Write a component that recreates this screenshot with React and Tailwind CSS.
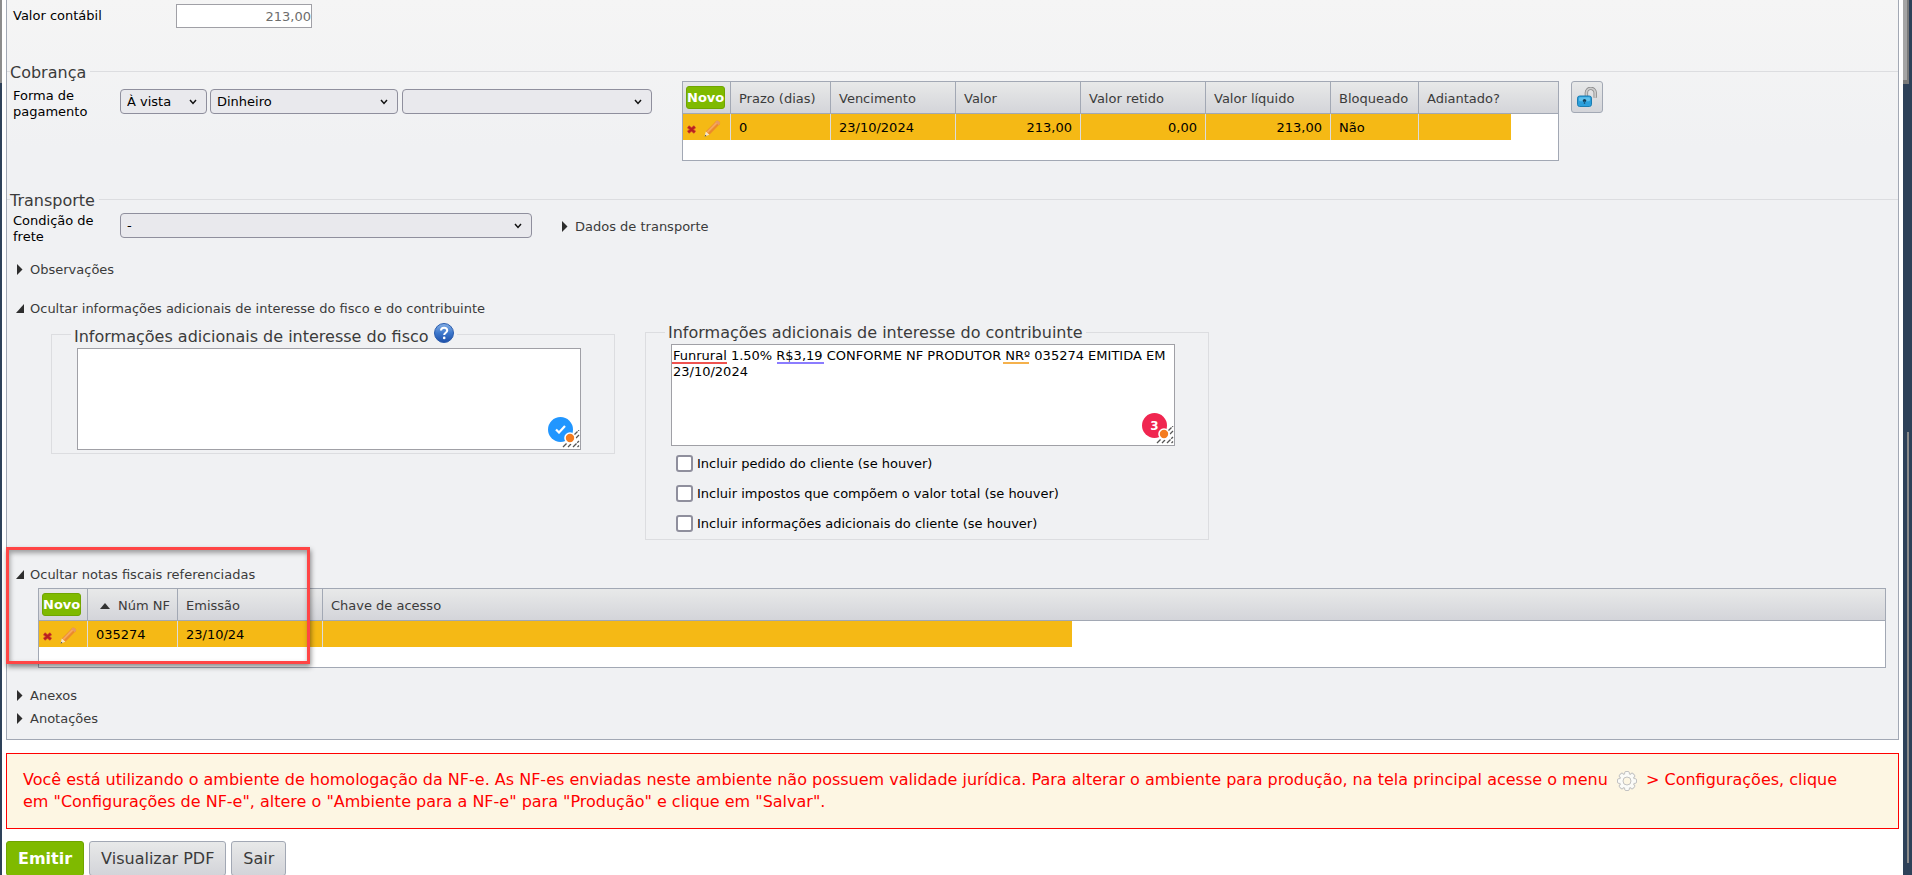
import React, { useState } from "react";

const DeleteIcon = () => (
  <svg width="9" height="9" viewBox="0 0 9 9" aria-hidden="true">
    <path d="M1 1.5l7 6M8 1.5l-7 6" stroke="#d4502c" strokeWidth="3.4" />
    <path d="M1.4 1.8l6.2 5.4M7.6 1.8L1.4 7.2" stroke="#b8201f" strokeWidth="2" />
  </svg>
);

const PencilIcon = () => (
  <svg width="17" height="17" viewBox="0 0 17 17" aria-hidden="true">
    <path d="M1.8 11.6L12.2 1q1-1 2.2 0l1.2 1.1q1 1 0 2.2L5.4 14.8z" fill="#ec8a2c" />
    <path d="M3.2 12.4L13.4 2" stroke="#f5a85c" strokeWidth="2" />
    <path d="M12.2 1q1-1 2.2 0l1.2 1.1q1 1 0 2.2l-.9.9-3.4-3.3z" fill="#e79a63" />
    <path d="M1.8 11.6l3.6 3.2L.6 16.6z" fill="#f6e6cc" />
    <path d="M1.2 14.8l1.4 1.1-2 .7z" fill="#4a4a4a" />
  </svg>
);

const UnlockIcon = () => (
  <svg width="20" height="20" viewBox="0 0 20 20" aria-hidden="true">
    <path d="M9.4 9.5V5.8a4.4 4.4 0 0 1 8.8 0v5" fill="none" stroke="#8b8b8b" strokeWidth="3.4" />
    <path d="M9.4 9.5V5.8a4.4 4.4 0 0 1 8.8 0v5" fill="none" stroke="#cccccc" strokeWidth="1.8" />
    <rect x="0.5" y="9" width="14" height="10.5" rx="2.2" fill="#2b9fdb" stroke="#1b7db2" />
    <rect x="2" y="10.2" width="11" height="4" rx="1.2" fill="#5fc0ec" />
    <circle cx="7.5" cy="13.6" r="1.7" fill="#123c55" />
    <rect x="6.8" y="14" width="1.4" height="3" fill="#1a5f86" />
  </svg>
);

const HelpIcon = () => (
  <svg width="20" height="20" viewBox="0 0 20 20" className="mb-1 ml-[5px]" role="img" aria-label="Ajuda">
    <defs>
      <linearGradient id="help" x1="0" y1="0" x2="0" y2="1">
        <stop offset="0" stopColor="#86b0e6" />
        <stop offset="0.5" stopColor="#3d78cc" />
        <stop offset="1" stopColor="#1d4fa8" />
      </linearGradient>
    </defs>
    <circle cx="10" cy="10" r="9.5" fill="url(#help)" stroke="#2a5cad" />
    <path
      d="M7 7.6c0-3.8 6.2-3.8 6.2-.2 0 2.2-3 2.4-3 4.6"
      fill="none"
      stroke="#fff"
      strokeWidth="2.1"
    />
    <circle cx="10.2" cy="14.9" r="1.3" fill="#fff" />
  </svg>
);

const GearIcon = () => (
  <svg width="20" height="20" viewBox="0 0 20 20" className="mx-1 inline-block align-middle" aria-hidden="true">
    <g stroke="#c2c2c2" fill="#fbfbf8">
      {[0, 45, 90, 135].map((angle) => (
        <rect key={angle} x="7.6" y="0.5" width="4.8" height="19" rx="1.4" transform={`rotate(${angle} 10 10)`} />
      ))}
    </g>
    <circle cx="10" cy="10" r="7" fill="#fbfbf8" />
    <circle cx="10" cy="10" r="4" fill="#fdf6e3" stroke="#c2c2c2" />
  </svg>
);

const Toggle = ({ children, open: initial = false }) => {
  const [open, setOpen] = useState(initial);
  return (
    <button
      type="button"
      aria-expanded={open}
      onClick={() => setOpen(!open)}
      className="flex h-4 items-center gap-1.5 text-[#3b3b3b]"
    >
      <svg width="8" height="12" viewBox="0 0 8 12" aria-hidden="true">
        <path d={open ? "M8 1v9H0z" : "M1 0l5.5 5.5L1 11z"} fill="#2e2e2e" />
      </svg>
      {children}
    </button>
  );
};

const Select = ({ label, options, className }) => (
  <div className={`relative ${className}`}>
    <select
      aria-label={label}
      className="h-[25px] w-full appearance-none rounded border border-[#8f8f9d] bg-[#e9e9ed] pl-1.5 pr-5 text-black"
    >
      {options.map((option) => (
        <option key={option}>{option}</option>
      ))}
    </select>
    <svg
      width="8"
      height="6"
      viewBox="0 0 8 6"
      className="pointer-events-none absolute right-2.5 top-[10px]"
      aria-hidden="true"
    >
      <path d="M1 1l3 3.4L7 1" fill="none" stroke="#111" strokeWidth="1.5" />
    </svg>
  </div>
);

const headCell = "h-8 border-b border-[#a2a8b4] p-0 text-left font-normal text-[#3b3b3b]";
const bodyCell = "h-[26px] bg-[#f5b915] p-0 pt-0.5 text-black";

const Grid = ({ label, columns, actionsWidth, row }) => (
  <div className="border border-[#a2a8b4] bg-white pb-5">
    <table aria-label={label} className="w-full table-fixed border-separate border-spacing-0">
      <colgroup>
        <col className={actionsWidth} />
        {columns.map((column) => (
          <col key={column.name} className={column.width} />
        ))}
        <col />
      </colgroup>
      <thead>
        <tr className="bg-linear-to-b from-[#e8e9e9] to-[#d3d4d9]">
          <th className={`${headCell} border-r pl-[3px]`}>
            <button
              type="button"
              className="block h-[23px] w-[39px] rounded-[3px] border border-[#70a500] bg-[#7fba00] text-center font-bold text-white"
            >
              Novo
            </button>
          </th>
          {columns.map((column, index) => (
            <th
              key={column.name}
              className={`${headCell} ${index < columns.length - 1 ? "border-r" : ""} pl-2 pt-0.5`}
            >
              {column.sorted ? (
                <span className="flex items-center gap-2 pl-1">
                  <svg width="10" height="6" viewBox="0 0 10 6" aria-hidden="true">
                    <path d="M5 0l5 6H0z" fill="#333" />
                  </svg>
                  {column.name}
                </span>
              ) : (
                column.name
              )}
            </th>
          ))}
          <th className={headCell}></th>
        </tr>
      </thead>
      <tbody>
        <tr>
          <td className={`${bodyCell} border-r border-[#dcdcdc]`}>
            <div className="flex items-center gap-2 pl-1">
              <button type="button" aria-label="Excluir" className="pt-0.5">
                <DeleteIcon />
              </button>
              <button type="button" aria-label="Editar">
                <PencilIcon />
              </button>
            </div>
          </td>
          {columns.map((column, index) => (
            <td
              key={column.name}
              className={`${bodyCell} ${index < columns.length - 1 ? "border-r border-[#dcdcdc]" : ""} ${
                column.right ? "pr-2 text-right" : "pl-2"
              }`}
            >
              {row[index]}
            </td>
          ))}
          <td></td>
        </tr>
      </tbody>
    </table>
  </div>
);

const paymentColumns = [
  { name: "Prazo (dias)", width: "w-[100px]" },
  { name: "Vencimento", width: "w-[125px]" },
  { name: "Valor", width: "w-[125px]", right: true },
  { name: "Valor retido", width: "w-[125px]", right: true },
  { name: "Valor líquido", width: "w-[125px]", right: true },
  { name: "Bloqueado", width: "w-[88px]" },
  { name: "Adiantado?", width: "w-[92px]" },
];

const invoiceColumns = [
  { name: "Núm NF", width: "w-[90px]", sorted: true },
  { name: "Emissão", width: "w-[145px]" },
  { name: "Chave de acesso", width: "w-[749px]" },
];

const Section = ({ title, className, children }) => (
  <fieldset className={`border-t border-[#dcdde0] ${className}`}>
    <legend className="ml-[3px] h-5 pr-1 text-base leading-6 text-[#3b3b3b]">{title}</legend>
    {children}
  </fieldset>
);

const InfoBox = ({ title, help, defaultValue, marks, badge, badgeColor, children }) => (
  <fieldset className="w-[564px] border border-[#dcdde0] px-[25px] pb-[3px]">
    <legend className={`-ml-1.5 flex items-end px-[3px] text-base leading-5 text-[#3b3b3b] ${help ? "h-[26px]" : "h-[22px]"}`}>
      {title}
      {help && <HelpIcon />}
    </legend>
    <div className="relative mt-px w-[504px]">
      <textarea
        aria-label={title}
        spellCheck={false}
        defaultValue={defaultValue}
        className="block h-[102px] w-full resize-none border border-[#a0a0a6] bg-white px-px pt-[3px] leading-4 text-black"
      />
      {marks}
      <span
        className={`absolute bottom-2 right-2 flex h-[25px] w-[25px] items-center justify-center rounded-full text-xs font-bold text-white ${badgeColor}`}
      >
        {badge}
      </span>
      <svg width="18" height="18" viewBox="0 0 18 18" className="absolute bottom-0.5 right-px" aria-hidden="true">
        <path
          d="M1 17l4-4M6 17l3-3M11 17l6-6M15.5 17l1.5-1.5M12 5l5-5M14 8l3-3"
          stroke="#555"
          strokeWidth="1.3"
          strokeDasharray="5 1"
        />
        <circle cx="8" cy="8" r="5" fill="#f47c20" stroke="#fff" strokeWidth="1.6" />
      </svg>
    </div>
    {children}
  </fieldset>
);

const includeOptions = [
  "Incluir pedido do cliente (se houver)",
  "Incluir impostos que compõem o valor total (se houver)",
  "Incluir informações adicionais do cliente (se houver)",
];

const App = () => {
  return (
    <div className="flex min-h-screen bg-[#2e4159] font-['DejaVu_Sans',Verdana,sans-serif] text-[13px] leading-4 text-black">
      <div className="w-0.5 shrink-0">
        <div className="h-[83px] bg-[#8c8c8c]"></div>
      </div>

      <main className="min-w-0 flex-1 bg-white px-1">
        <div className="border border-t-0 border-[#a2a8b4] bg-linear-to-b from-[#f5f5f5] to-[#f0f1f3] to-20% pb-3">
          <div className="flex items-start pl-1.5 pt-1">
            <label htmlFor="valor" className="w-[163px] pt-1">
              Valor contábil
            </label>
            <input
              id="valor"
              type="text"
              defaultValue="213,00"
              className="h-6 w-[136px] border border-[#a0a0a6] bg-white text-right text-[#6d6d6d]"
            />
          </div>

          <Section title="Cobrança" className="mt-[33px]">
            <div className="flex items-start">
              <div className="flex w-[675px] items-start pl-1.5 pt-2">
                <span className="-mt-px w-[107px] pr-5">Forma de pagamento</span>
                <Select label="Forma de pagamento" options={["À vista", "A prazo"]} className="w-[87px]" />
                <Select label="Meio de pagamento" options={["Dinheiro"]} className="ml-[3px] w-[188px]" />
                <Select label="Conta" options={[""]} className="ml-1 w-[250px]" />
              </div>
              <div className="w-[877px]">
                <Grid
                  label="Parcelas"
                  columns={paymentColumns}
                  actionsWidth="w-12"
                  row={["0", "23/10/2024", "213,00", "0,00", "213,00", "Não", ""]}
                />
              </div>
              <button
                type="button"
                aria-label="Desbloquear"
                className="ml-3 flex h-8 w-8 items-center justify-center rounded-[3px] border border-[#a2a8b4] bg-linear-to-b from-[#e8e9e9] to-[#d3d4d9]"
              >
                <UnlockIcon />
              </button>
            </div>
          </Section>

          <Section title="Transporte" className="mt-7">
            <div className="flex items-start pl-1.5 pt-1">
              <span className="w-[107px] pr-5">Condição de frete</span>
              <Select label="Condição de frete" options={["-"]} className="w-[412px]" />
              <div className="ml-[29px] pt-1.5">
                <Toggle>Dados de transporte</Toggle>
              </div>
            </div>
          </Section>

          <div className="mt-[17px] pl-[9px]">
            <Toggle>Observações</Toggle>
          </div>

          <div className="mt-[23px] pl-[9px]">
            <Toggle open>Ocultar informações adicionais de interesse do fisco e do contribuinte</Toggle>
          </div>

          <div className="mt-1 flex items-start gap-[30px] pl-11">
            <InfoBox
              title="Informações adicionais de interesse do fisco"
              help
              badgeColor="bg-[#2196ff]"
              badge={
                <svg width="11" height="9" viewBox="0 0 11 9" aria-hidden="true">
                  <path d="M1 4.5l3 3L10 1" fill="none" stroke="#fff" strokeWidth="2.2" />
                </svg>
              }
            />
            <InfoBox
              title="Informações adicionais de interesse do contribuinte"
              defaultValue="Funrural 1.50% R$3,19 CONFORME NF PRODUTOR NRº 035274 EMITIDA EM 23/10/2024"
              badgeColor="bg-[#f02650]"
              badge="3"
              marks={
                <>
                  <span className="absolute left-px top-[18px] h-0.5 w-[55px] bg-[#ef5350]"></span>
                  <span className="absolute left-[106px] top-[18px] h-0.5 w-[47px] bg-[#8b7cff]"></span>
                  <span className="absolute left-[332px] top-[18px] h-0.5 w-[26px] bg-[#f5b14c]"></span>
                </>
              }
            >
              <div className="flex flex-col gap-[13px] pb-1 pl-[5px] pt-[9px]">
                {includeOptions.map((option) => (
                  <label key={option} className="flex items-center gap-1">
                    <input
                      type="checkbox"
                      className="h-[17px] w-[17px] appearance-none rounded-[3px] border-2 border-[#8f8f9d] bg-white checked:bg-[#0060df]"
                    />
                    {option}
                  </label>
                ))}
              </div>
            </InfoBox>
          </div>

          <div className="relative mt-[27px] pl-[9px]">
            <Toggle open>Ocultar notas fiscais referenciadas</Toggle>
            <div className="ml-[22px] mr-3 mt-[5px]">
              <Grid
                label="Notas fiscais referenciadas"
                columns={invoiceColumns}
                actionsWidth="w-[49px]"
                row={["035274", "23/10/24", ""]}
              />
            </div>
            <div className="pointer-events-none absolute -left-px -top-5 h-[117px] w-[304px] border-[3px] border-[#ff4545] shadow-[1px_3px_5px_rgba(0,0,0,0.45),inset_1px_3px_5px_rgba(0,0,0,0.35)]"></div>
          </div>

          <div className="mt-5 flex flex-col gap-[7px] pl-[9px]">
            <Toggle>Anexos</Toggle>
            <Toggle>Anotações</Toggle>
          </div>
        </div>

        <p className="mt-[13px] border border-[#f00] bg-[#fdf6e3] py-[15px] pl-4 pr-10 text-base leading-[22px] text-[#f00]">
          <span>
            Você está utilizando o ambiente de homologação da NF-e. As NF-es enviadas neste ambiente não possuem
            validade jurídica. Para alterar o ambiente para produção, na tela principal acesse o menu
          </span>{" "}
          <GearIcon /> <span>&gt; Configurações, clique</span>{" "}
          <span>em "Configurações de NF-e", altere o "Ambiente para a NF-e" para "Produção" e clique em "Salvar".</span>
        </p>

        <div className="mt-3 flex gap-[5px] text-base">
          <button
            type="button"
            className="h-[35px] rounded-[3px] border border-[#70a500] bg-[#7fba00] px-[11px] font-bold text-white"
          >
            Emitir
          </button>
          <button
            type="button"
            className="h-[35px] rounded-[3px] border border-[#a2a8b4] bg-linear-to-b from-[#e8e9e9] to-[#d3d4d9] px-[11px] text-[#3b3b3b]"
          >
            Visualizar PDF
          </button>
          <button
            type="button"
            className="h-[35px] rounded-[3px] border border-[#a2a8b4] bg-linear-to-b from-[#e8e9e9] to-[#d3d4d9] px-[11px] text-[#3b3b3b]"
          >
            Sair
          </button>
        </div>
      </main>

      <div className="flex w-[9px] shrink-0 flex-col">
        <div className="h-[84px] w-1.5 border-b-4 border-r-2 border-[#7a7a7a] bg-[#a5a5a5]"></div>
        <div className="ml-1 mt-[348px] h-[431px] w-0.5 bg-[#8a8a8a]"></div>
      </div>
    </div>
  );
};

export default App;
